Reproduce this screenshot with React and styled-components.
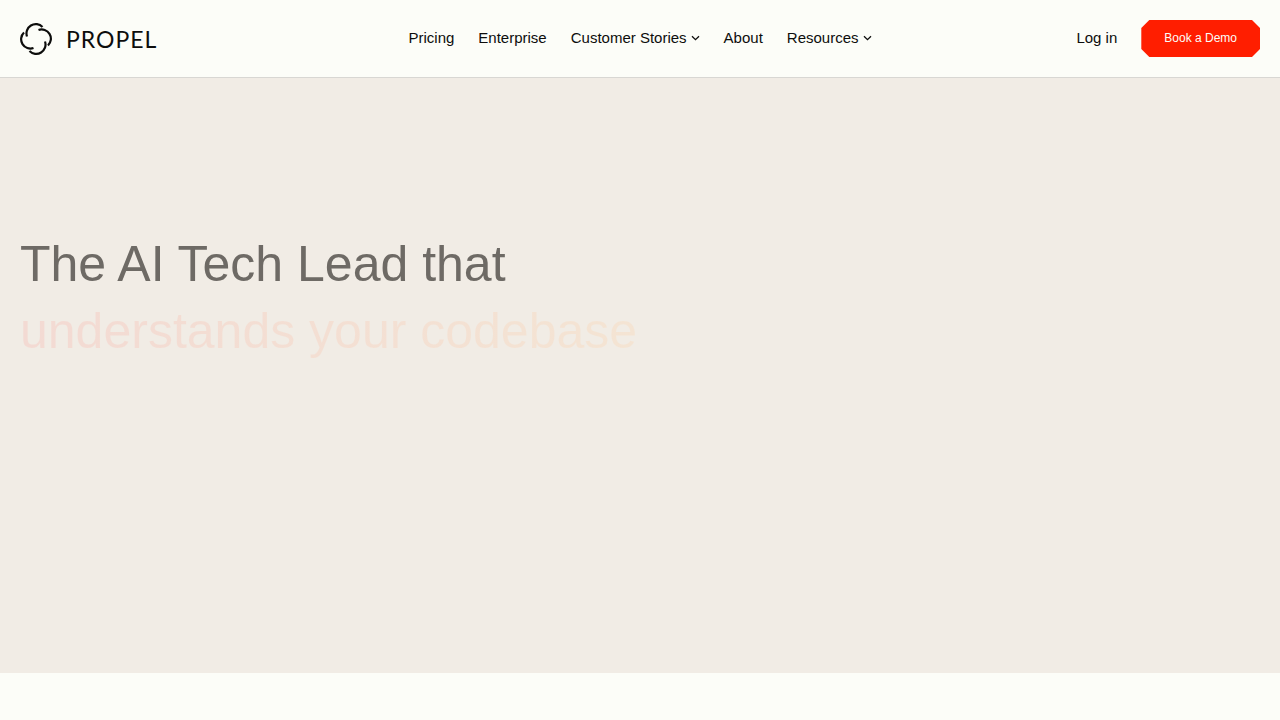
import React from "react";
import styled, { createGlobalStyle } from "styled-components";

const Global = createGlobalStyle`
  *, *::before, *::after { box-sizing: border-box; }
  body {
    margin: 0;
    background: #fcfdf8;
    color: #0d0d0c;
    font-family: "Liberation Sans", Arial, sans-serif;
  }
  a { color: inherit; text-decoration: none; }
`;

const Header = styled.header`
  display: grid;
  grid-template-columns: 1fr auto 1fr;
  align-items: center;
  padding: 20px;
  background: #fcfdf8;
  border-bottom: 1px solid #d8d7d3;
`;

const Brand = styled.a`
  display: flex;
  align-items: center;
  gap: 14px;
  justify-self: start;
  font-family: Lato, sans-serif;
  font-size: 23px;
  letter-spacing: 1px;
  line-height: 30px;
`;

const Nav = styled.nav`
  display: flex;
  align-items: center;
  gap: 24px;
`;

const navText = `
  padding: 0 0 2px;
  font-size: 15px;
  line-height: 20px;
  white-space: nowrap;
`;

const NavLink = styled.a`
  ${navText}
`;

const MenuButton = styled.button`
  ${navText}
  display: flex;
  align-items: center;
  gap: 4px;
  border: 0;
  background: none;
  color: inherit;
  font-family: inherit;
  cursor: pointer;
`;

const Actions = styled.div`
  display: flex;
  align-items: center;
  justify-self: end;
  gap: 24px;
`;

const DemoButton = styled.button`
  height: 37px;
  padding: 0 23px 2px;
  border: 0;
  background: #ff1e00;
  color: #fcfdf8;
  font-family: inherit;
  font-size: 12px;
  line-height: 16px;
  white-space: nowrap;
  cursor: pointer;
  clip-path: polygon(
    8px 0, calc(100% - 8px) 0, 100% 8px, 100% calc(100% - 8px),
    calc(100% - 8px) 100%, 8px 100%, 0 calc(100% - 8px), 0 8px
  );
`;

const Hero = styled.main`
  padding: 153px 20px 308px;
  background: #f1ece5;
`;

const Title = styled.h1`
  margin: 0;
  color: #6e6a65;
  font-size: 50px;
  font-weight: 400;
  line-height: 67px;
`;

const TitleLine = styled.span`
  display: block;
`;

const Accent = styled(TitleLine)`
  width: fit-content;
  background: linear-gradient(90deg, #f3dad3, #f4e4d3);
  background-clip: text;
  -webkit-background-clip: text;
  color: transparent;
`;

const ARC = "M7 13.5A9.3 9.3 0 0 1 22.5 4";

function Logo() {
  return (
    <svg width="32" height="32" viewBox="0 0 32 32" fill="none" stroke="currentColor" strokeWidth="2.2" aria-hidden="true">
      {[0, 90, 180, 270].map((angle) => (
        <path key={angle} d={ARC} transform={`rotate(${angle} 16 16)`} />
      ))}
    </svg>
  );
}

function Chevron() {
  return (
    <svg width="9" height="10" viewBox="0 0 9 10" fill="none" stroke="currentColor" strokeWidth="1.3" aria-hidden="true">
      <path d="M1 3.2L4.5 6.7L8 3.2" />
    </svg>
  );
}

export default function App() {
  return (
    <>
      <Global />
      <Header>
        <Brand href="#">
          <Logo />
          PROPEL
        </Brand>
        <Nav>
          <NavLink href="#pricing">Pricing</NavLink>
          <NavLink href="#enterprise">Enterprise</NavLink>
          <MenuButton type="button">Customer Stories<Chevron /></MenuButton>
          <NavLink href="#about">About</NavLink>
          <MenuButton type="button">Resources<Chevron /></MenuButton>
        </Nav>
        <Actions>
          <NavLink href="#login">Log in</NavLink>
          <DemoButton type="button">Book a Demo</DemoButton>
        </Actions>
      </Header>
      <Hero>
        <Title>
          <TitleLine>The AI Tech Lead that</TitleLine>
          <Accent>understands your codebase</Accent>
        </Title>
      </Hero>
    </>
  );
}
